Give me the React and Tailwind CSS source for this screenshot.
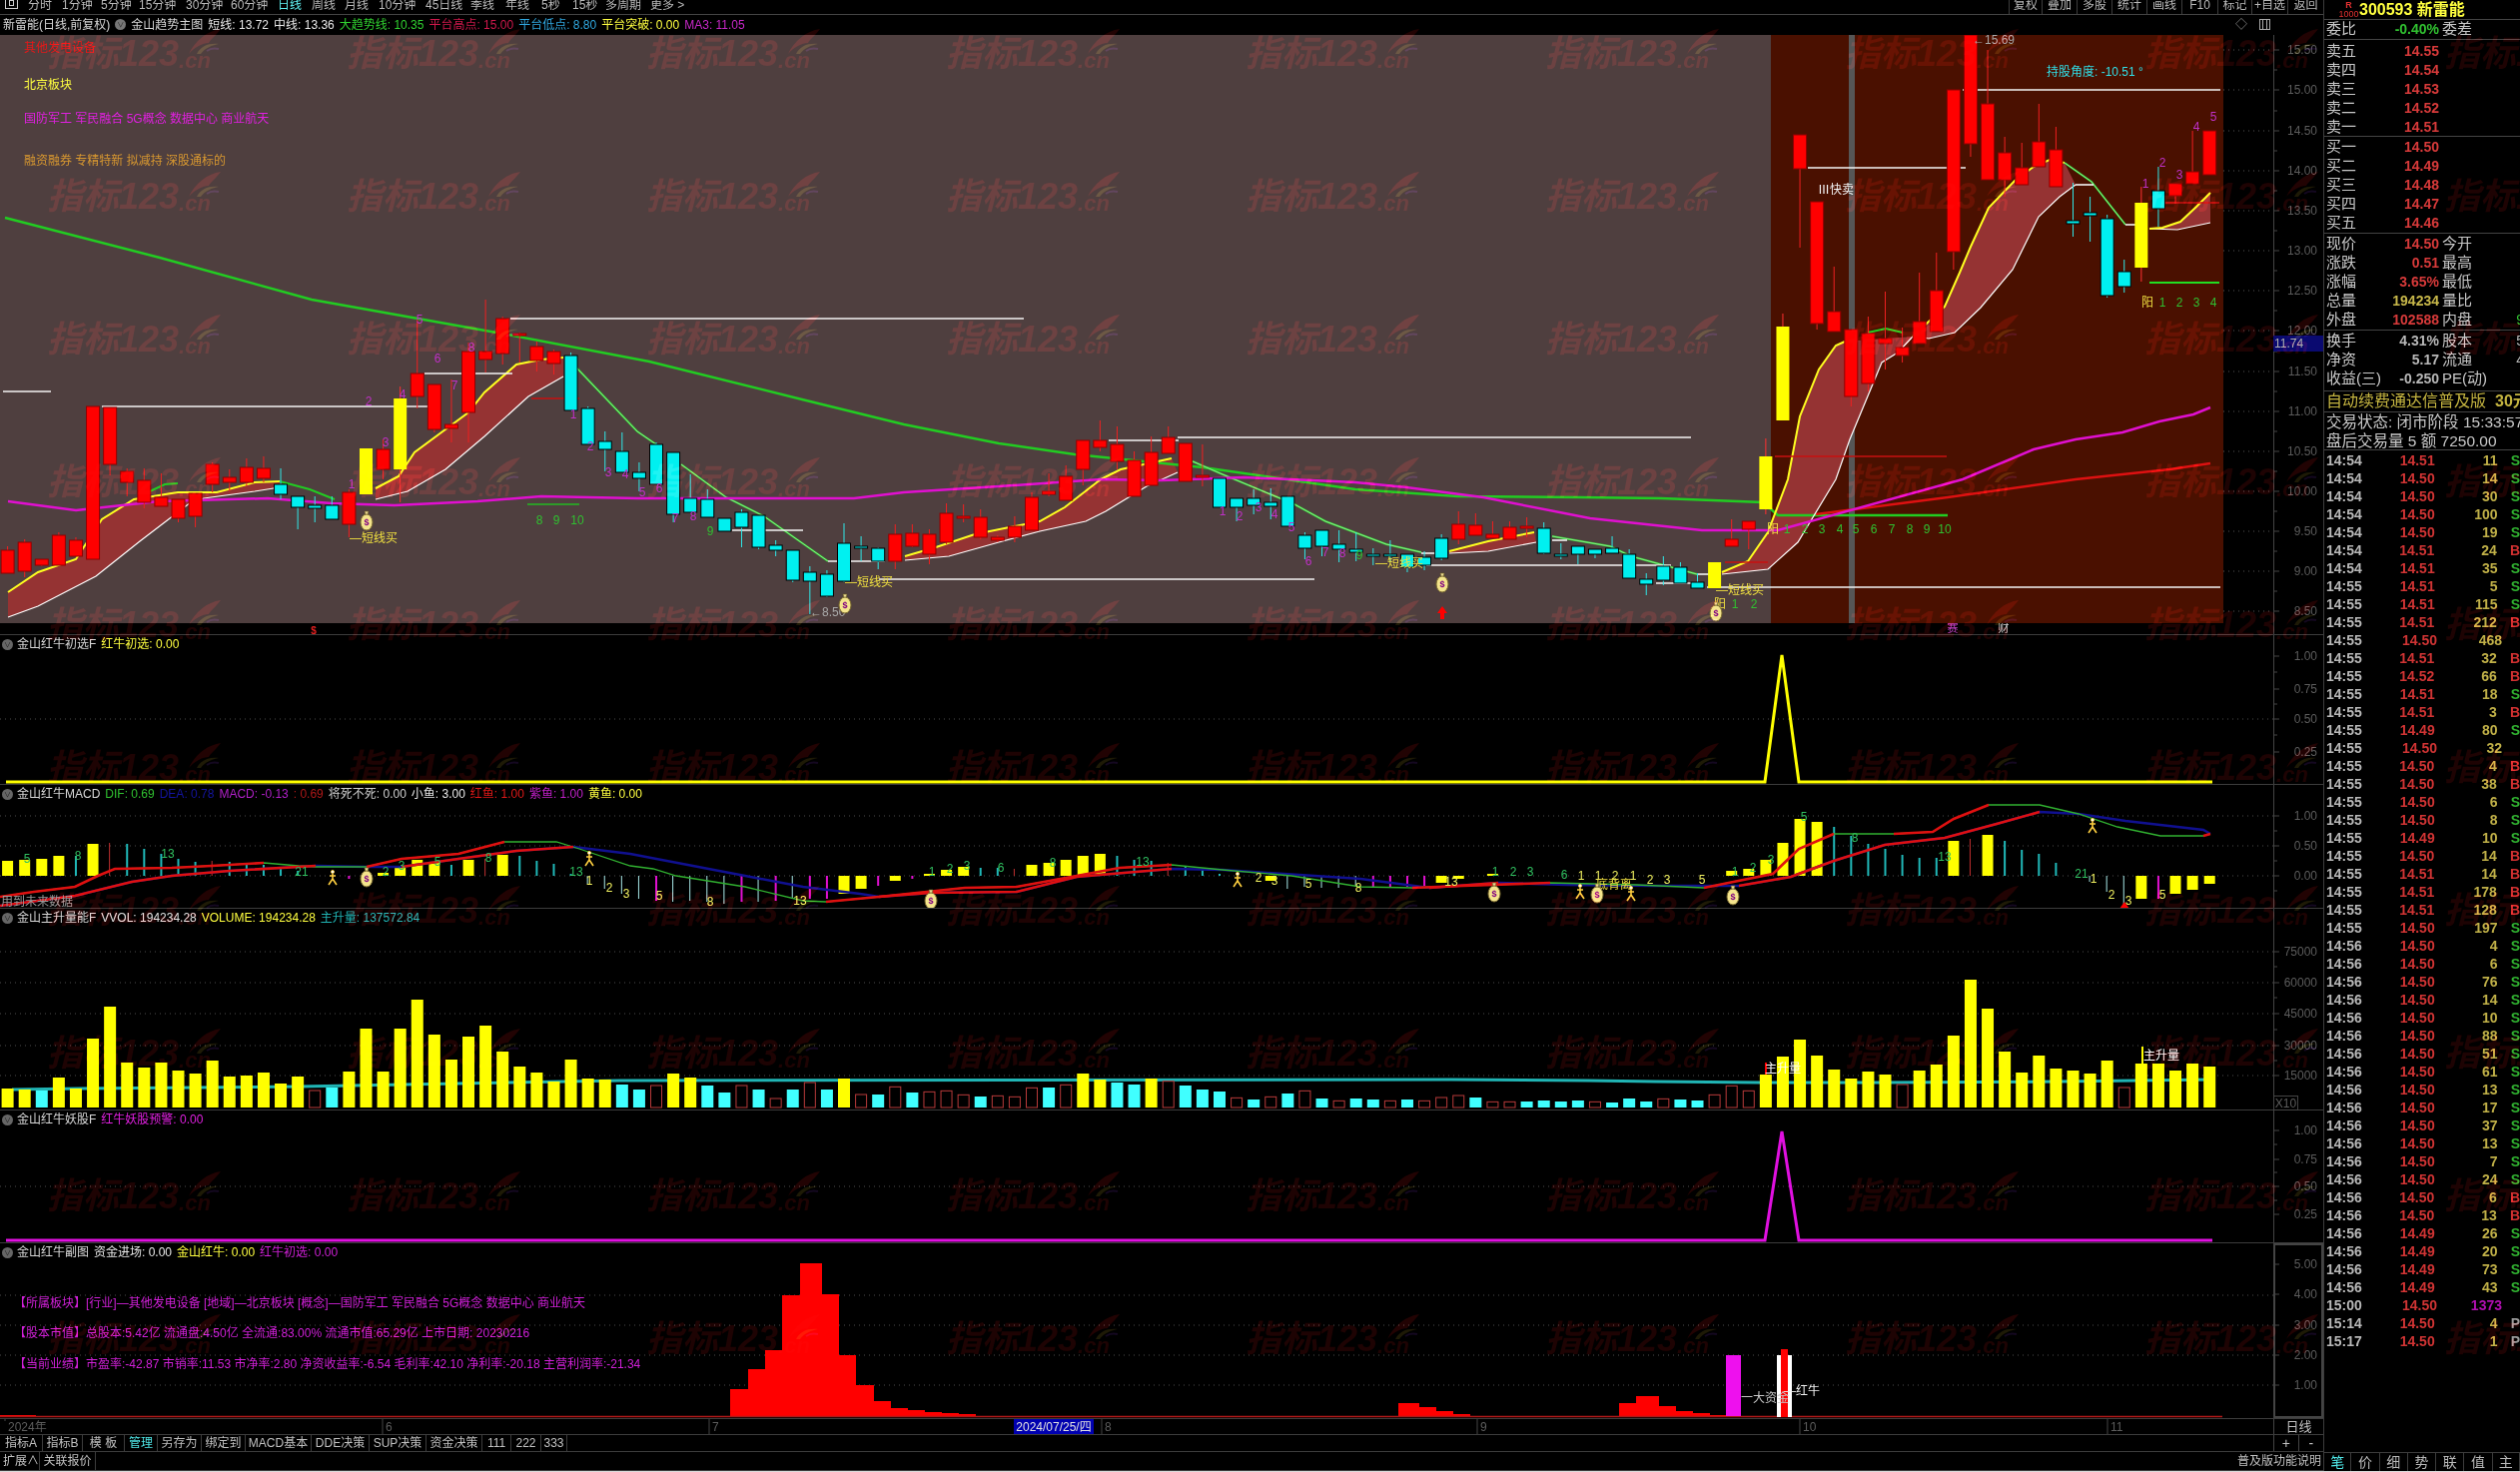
import React from "react";

const FONT = "[font-family:'Liberation_Sans','Noto_Sans_CJK_SC',sans-serif]";
const X = (i) => 7.6 + 17.09 * i;

/* type, high, top, bottom, low */
const C = [
["r",547,551,574,574],["r",540,543,572,578],["r",560,560,566,567],["r",533,536,566,566],["r",538,541,557,557],["r",407,407,560,560],["r",408,408,465,476],["r",469,472,483,497],["r",469,481,503,509],["r",474,498,507,507],
["r",500,500,519,523],["r",494,494,517,528],["r",463,465,485,493],["r",470,478,483,492],["r",459,468,483,487],["r",457,469,479,483],["c",469,485,495,500],["c",497,497,508,530],["c",497,506,509,523],["c",497,506,520,520],
["r",490,493,525,538],["y",449,449,495,495],["r",440,450,470,480],["y",387,399,470,503],["r",320,374,397,409],["r",385,385,430,433],["r",380,425,429,443],["r",343,352,413,443],["r",300,352,360,373],["r",317,319,354,365],
["r",333,334,336,363],["r",342,347,361,372],["r",350,352,364,375],["c",353,356,411,411],["c",407,409,445,445],["c",432,442,450,472],["c",433,452,473,473],["c",463,473,479,492],["c",443,445,485,485],["c",453,453,515,523],
["c",475,499,513,513],["c",490,500,518,518],["c",519,519,532,532],["c",510,513,528,548],["c",516,516,548,550],["c",541,546,551,557],["c",551,551,581,583],["c",567,573,582,615],["c",571,575,597,598],["c",524,544,582,583],
["c",537,547,549,562],["c",548,549,562,570],["r",525,535,562,570],["r",525,534,547,548],["r",530,535,555,565],["r",504,514,543,545],["r",505,517,519,523],["r",510,518,538,540],["r",536,538,541,543],["r",517,527,538,543],
["r",493,498,531,531],["r",474,492,495,497],["r",466,477,501,501],["r",441,441,470,486],["r",421,441,448,452],["r",427,445,462,470],["r",452,461,497,497],["r",437,453,486,486],["r",427,438,454,454],["r",444,444,482,482],
["r",445,476,478,487],["c",479,479,508,508],["c",499,499,508,522],["c",490,499,506,515],["c",489,503,507,520],["c",497,497,527,527],["c",533,536,549,560],["c",531,531,547,557],["c",531,545,550,563],["c",533,550,553,562],
["c",549,555,557,566],["c",541,555,557,563],["c",555,555,568,573],["c",552,558,566,571],["c",535,539,559,561],["r",512,525,540,545],["r",514,526,536,536],["r",522,535,539,539],["r",522,528,540,540],["r",518,527,529,538],
["c",523,529,554,555],["c",544,555,557,560],["c",547,547,555,565],["c",550,550,555,559],["c",537,549,554,554],["c",550,555,579,579],["c",574,580,585,596],["c",557,567,581,586],["c",563,568,584,584],["c",574,583,589,589],
["y",563,563,589,589],["r",520,540,547,547],["r",522,522,530,550],["y",439,457,510,515],["y",314,327,421,421],["r",135,135,169,248],["r",202,202,324,330],["r",267,312,332,332],["r",330,330,397,407],["r",317,334,384,392],
["r",292,339,344,370],["r",328,348,356,363],["r",273,322,344,344],["r",253,291,332,332],["r",90,90,252,270],["r",35,35,144,157],["r",50,104,180,180],["r",137,153,180,197],["r",143,168,185,185],["r",104,142,167,167],
["r",127,150,187,187],["c",183,221,224,237],["c",197,213,216,242],["c",215,219,296,298],["c",260,272,287,293],["y",187,203,268,282],["c",167,191,209,227],["r",184,184,196,204],["r",131,172,184,184],["r",131,131,175,175],
];

const RIB = [
 {u:[[8,593],[38,573],[76,560],[102,520],[134,500],[178,493],[217,493],[255,483],[280,482]], l:[[8,618],[38,607],[96,577],[140,542],[191,503],[204,499],[255,492],[280,488]]},
 {u:[[376,489],[399,477],[415,453],[446,430],[469,413],[485,393],[517,365],[542,360],[564,358]], l:[[376,500],[408,492],[446,470],[485,437],[529,397],[564,377]]},
 {u:[[906,557],[937,548],[976,535],[1041,522],[1066,508],[1102,480],[1122,470],[1173,459]], l:[[906,561],[950,557],[1000,543],[1041,532],[1087,522],[1107,512],[1148,487],[1179,473]]},
 {u:[[1451,552],[1490,542],[1536,533]], l:[[1451,554],[1490,552],[1538,543]]},
 {u:[[1724,573],[1750,562],[1770,533],[1790,480],[1802,417],[1821,370],[1838,346],[1847,342]], l:[[1724,575],[1770,570],[1800,543],[1838,480],[1852,440],[1884,363],[1900,353],[1915,337]]},
 {u:[[1915,337],[1947,307],[1962,273],[1973,247],[1991,208],[2018,180],[2036,167],[2052,160],[2067,163]], l:[[1915,337],[1931,339],[1957,333],[1983,308],[2015,270],[2041,217],[2062,197],[2078,185]]},
 {u:[[2152,229],[2165,228],[2183,222],[2199,207],[2213,193]], l:[[2152,229],[2180,230],[2213,223]]},
];
const pts = (a) => a.map((p) => p.join(",")).join(" ");

const BIGGREEN = [[5,218],[160,258],[312,300],[497,333],[650,362],[803,400],[905,425],[1000,444],[1076,455],[1204,468],[1357,490],[1459,497],[1582,498],[1663,499],[1765,503],[1780,516],[1950,516]];
const PURPLE = [[8,502],[76,511],[159,502],[268,499],[332,504],[395,506],[478,502],[542,497],[638,499],[855,499],[905,493],[1000,487],[1102,480],[1163,481],[1245,478],[1357,483],[1408,488],[1485,498],[1592,519],[1704,531],[1780,531],[1965,480],[2036,450],[2078,440],[2125,433],[2162,422],[2196,415],[2213,408]];
const REDL = [[1818,515],[1950,498],[2078,480],[2172,470],[2213,464]];
const THINGREEN = [
 [[577,368],[638,432],[657,445]],[[682,465],[727,498],[765,517],[829,562]],
 [[1194,462],[1224,475],[1296,505],[1327,522],[1388,545],[1423,553]],
 [[1554,537],[1612,547],[1633,557],[1699,575]],
 [[2067,163],[2094,182],[2128,225]],
];
const GREENTOP = [[[150,492],[165,485],[178,484]],[[280,482],[310,490],[335,500]],[[1870,333],[1888,329],[1905,333]]];
const WHITEL = [[3,392,51],[102,407,430],[425,374,513],[511,319,1025],[1179,438,1693],[1110,441,1180],[880,580,1316],[733,531,804],[1428,566,1673],[1709,588,2223],[1658,584,1704],[1965,90,2223],[1810,168,1968],[829,562,886],[1423,554,1439],[1554,541,1569],[2128,225,2140],[2078,185,2096],[1700,575,1715]];
const REDH = [[1777,457,1949],[2154,203,2222],[532,399,580],[1727,563,1770]];

function T({x,y,c="#fff",s=12,a="start",children}) {
  return <text x={x} y={y} fill={c} fontSize={s} textAnchor={a} dominantBaseline="central">{children}</text>;
}
function Bag({x,y}) {
  return <g transform={`translate(${x} ${y})`}>
    <path d="M-2 -10 L2 -10 L1 -6 L-1 -6 Z" fill="#e8d890" stroke="#6a5a20" strokeWidth=".6"/>
    <ellipse cx="0" cy="1" rx="6" ry="8" fill="#f4e48c" stroke="#7a6a30"/>
    <text x="0" y="1" fontSize="9" fontWeight="bold" fill="#800080" textAnchor="middle" dominantBaseline="central">$</text>
  </g>;
}
function Man({x,y}) {
  return <g transform={`translate(${x} ${y})`} stroke="#ffd040" strokeWidth="1.6" fill="none">
    <circle cx="0" cy="-6" r="1.6" fill="#fff" stroke="#ffd040" strokeWidth=".8"/>
    <path d="M0 -4 L0 1 L-4 7 M0 1 L4 7 M-3 -2 L3 -2"/>
  </g>;
}

function MainDraw() {
  const nums = [[420,320,"5"],[472,348,"8"],[438,359,"6"],[455,386,"7"],[369,402,"2"],[403,395,"4"],[386,443,"3"],[352,485,"1"],[574,415,"1"],[591,447,"2"],[609,473,"3"],[626,475,"4"],[643,493,"5"],[660,489,"6"],[676,519,"7"],[694,517,"8"],[1224,512,"1"],[1241,517,"2"],[1260,508,"3"],[1276,515,"4"],[1293,528,"5"],[1310,562,"6"],[1327,553,"7"],[1344,554,"8"],[2148,184,"1"],[2165,163,"2"],[2182,175,"3"],[2199,127,"4"],[2216,117,"5"]];
  const greens = [[711,532,"9"],[540,521,"8"],[557,521,"9"],[578,521,"10"],[1361,556,"9"],[1737,605,"1"],[1756,605,"2"],[1789,530,"1"],[1807,530,"2"],[1824,530,"3"],[1842,530,"4"],[1858,530,"5"],[1876,530,"6"],[1894,530,"7"],[1912,530,"8"],[1929,530,"9"],[1947,530,"10"],[2165,303,"1"],[2182,303,"2"],[2199,303,"3"],[2216,303,"4"]];
  return (
    <svg className="block" width="2226" height="589" viewBox="0 35 2226 589">
      <rect x="1773" y="35" width="453" height="589" fill="#4a1000"/>
      <rect x="1851" y="35" width="6" height="589" fill="#565656"/>
      <T x={24} y={48} c="#e81818">其他发电设备</T>
      <T x={24} y={85} c="#ffff40">北京板块</T>
      <T x={24} y={119} c="#e020e0">国防军工 军民融合 5G概念 数据中心 商业航天</T>
      <T x={24} y={161} c="#d89830">融资融券 专精特新 拟减持 深股通标的</T>
      {RIB.map((r,i)=><polygon key={i} points={pts([...r.u,...[...r.l].reverse()])} fill="#953333"/>)}
      <polyline points={pts(BIGGREEN)} fill="none" stroke="#22cc22" strokeWidth="2.5"/>
      <polyline points={pts(REDL)} fill="none" stroke="#dd1111" strokeWidth="2.5"/>
      {RIB.map((r,i)=><g key={i}><polyline points={pts(r.l)} fill="none" stroke="#fff" strokeWidth="1.2"/><polyline points={pts(r.u)} fill="none" stroke="#ffff20" strokeWidth="2"/></g>)}
      {THINGREEN.map((l,i)=><g key={i}><polyline points={pts(l)} fill="none" stroke="#30d030" strokeWidth="2"/><polyline points={pts(l)} fill="none" stroke="#c8f8c8" strokeWidth=".6"/></g>)}
      {GREENTOP.map((l,i)=><polyline key={i} points={pts(l)} fill="none" stroke="#22cc22" strokeWidth="2"/>)}
      {WHITEL.map(([a,y,b],i)=><line key={i} x1={a} x2={b} y1={y} y2={y} stroke="#f4f4f4" strokeWidth="1.6"/>)}
      {REDH.map(([a,y,b],i)=><line key={i} x1={a} x2={b} y1={y} y2={y} stroke="#c81010" strokeWidth="1.5"/>)}
      <line x1="2152" x2="2222" y1="283" y2="283" stroke="#22dd22" strokeWidth="2"/>
      <line x1="528" x2="580" y1="505" y2="505" stroke="#22bb22" strokeWidth="1.5"/>
      <polyline points={pts(PURPLE)} fill="none" stroke="#e010d0" strokeWidth="2.5"/>
      {C.map(([t,h,top,b,l],i)=>{
        const x=X(i); const col=t==="r"?"#ff0000":t==="c"?"#00f0f0":"#ffff00";
        const wick=t==="c"?"#30e8e8":t==="y"?"#ff3030":"#f02020";
        return <g key={i}>
          <line x1={x} x2={x} y1={h} y2={l} stroke={wick} strokeWidth="1"/>
          <rect x={x-6.5} y={top} width="13" height={Math.max(b-top,2)} fill={col} stroke={t==="r"?"#900000":t==="c"?"#000":"none"} strokeWidth="1"/>
        </g>;
      })}
      {nums.map(([x,y,n],i)=><T key={i} x={x} y={y} c="#c030c8" a="middle">{n}</T>)}
      {greens.map(([x,y,n],i)=><T key={i} x={x} y={y} c="#30c030" a="middle">{n}</T>)}
      <T x={350} y={539} c="#f0e040">—短线买</T>
      <T x={846} y={583} c="#f0e040">—短线买</T>
      <T x={1377} y={564} c="#f0e040">—短线买</T>
      <T x={1718} y={591} c="#f0e040">—短线买</T>
      <T x={811} y={613} c="#a8a8a8">←8.50</T>
      <T x={1722} y={605} c="#f0e040" a="middle">阳</T>
      <T x={1775} y={530} c="#f0e040" a="middle">阳</T>
      <T x={2150} y={303} c="#f0e040" a="middle">阳</T>
      <T x={1820} y={190} c="#f4f4f4">Ⅲ快卖</T>
      <T x={2049} y={72} c="#30e0e8">持股角度: -10.51 °</T>
      <T x={1975} y={40} c="#a8a8a8">←15.69</T>
      <Bag x={367} y={522}/><Bag x={846} y={605}/><Bag x={1444} y={584}/><Bag x={1718} y={613}/>
      <path d="M1444 607 L1449 614 L1446 614 L1446 620 L1442 620 L1442 614 L1439 614 Z" fill="#ff0000"/>
    </svg>
  );
}

function Strip() {
  return (
    <svg className="block" width="2226" height="11" viewBox="0 624 2226 11">
      <text x="314" y="631" fontSize="10" fontWeight="bold" fill="#e02020" textAnchor="middle" dominantBaseline="central">$</text>
      <T x={1955} y={629} c="#c040c0" s={11} a="middle">赛</T>
      <T x={2006} y={629} c="#d0d0d0" s={11} a="middle">财</T>
    </svg>
  );
}

function Axis({top,h,vals,left=2276,dots=[],mids=[]}) {
  return (
    <svg className="block shrink-0" width={2326-left} height={h} viewBox={`${left} ${top} ${2326-left} ${h}`}>
      {dots.map((y,i)=><line key={i} x1={left} x2="2276" y1={y} y2={y} stroke="#555" strokeDasharray="1 4"/>)}
      <line x1="2276.5" x2="2276.5" y1={top} y2={top+h} stroke="#444"/>
      {vals.map(([y,v],i)=><g key={i}><line x1="2276" x2="2282" y1={y} y2={y} stroke="#444"/><T x={2320} y={y} c="#5c5c5c" a="end">{v}</T></g>)}
      {mids.map((y,i)=><line key={i} x1="2276" x2="2280" y1={y} y2={y} stroke="#444"/>)}
    </svg>
  );
}

function Head({name,items}) {
  return (
    <div className="absolute left-0 top-0 flex h-[18px] items-center gap-[5px] pl-[2px] text-[12px] whitespace-nowrap">
      <span className="mr-[-1px] flex h-[11px] w-[11px] items-center justify-center rounded-full bg-[#666] text-[7px] leading-none text-[#222]">∨</span>
      <span className="text-[#d8d8d8]">{name}</span>
      {items.map(([t,c],i)=><span key={i} style={{color:c}}>{t}</span>)}
    </div>
  );
}

function Panel({top,h,name,items,vals,dots=[],mids=[],children,extra}) {
  return (
    <div className="flex border-b border-[#3c3c3c]" style={{height:h}}>
      <div className="relative w-[2276px] shrink-0">
        <svg className="block" width="2276" height={h-1} viewBox={`0 ${top} 2276 ${h-1}`}>
          {dots.map((y,i)=><line key={i} x1="0" x2="2276" y1={y} y2={y} stroke="#4c4c4c" strokeDasharray="1 4"/>)}
          {children}
        </svg>
        <Head name={name} items={items}/>
      </div>
      <Axis top={top} h={h-1} vals={vals} mids={mids}/>
      {extra}
    </div>
  );
}

/* MACD bars: index -> [type, y end]  */
const MB = {0:["y",862],1:["y",861],2:["y",860],3:["y",857],4:["c",857],5:["y",845],6:["r",844],7:["c",845],8:["c",850],9:["c",855],10:["c",860],11:["c",863],12:["r",862],13:["c",863],14:["c",864],15:["c",866],16:["c",870],17:["c",872],20:["p",880],21:["y",882],22:["y",874],23:["y",867],24:["y",861],25:["y",864],26:["c",866],27:["y",861],28:["r",860],29:["y",856],30:["c",857],31:["c",862],32:["c",865],33:["c",875],34:["w",885],35:["w",890],36:["w",895],37:["w",900],38:["p",902],39:["w",903],40:["w",902],41:["w",903],42:["w",905],43:["p",903],44:["w",903],45:["p",902],46:["w",900],47:["p",900],48:["p",900],49:["y",895],50:["y",890],51:["p",887],52:["y",882],53:["p",880],54:["y",875],55:["y",871],56:["y",868],57:["c",869],58:["c",869],59:["r",870],60:["y",866],61:["y",864],62:["y",861],63:["y",857],64:["y",855],65:["c",857],66:["c",861],67:["c",862],68:["r",864],69:["c",867],70:["c",870],71:["c",875],74:["y",882],75:["w",890],76:["w",888],77:["w",889],78:["w",889],79:["w",888],80:["p",889],81:["p",889],82:["p",888],83:["p",887],84:["y",884],85:["y",880],87:["y",875],101:["y",872],102:["y",870],103:["y",861],104:["y",844],105:["y",820],106:["y",823],107:["c",828],108:["c",837],109:["c",845],110:["c",850],111:["c",856],112:["c",859],113:["c",859],114:["y",842],115:["r",840],116:["y",836],117:["c",842],118:["c",851],119:["c",855],120:["c",864],122:["w",883],123:["w",893],124:["w",906],125:["y",900],126:["p",900],127:["y",895],128:["y",891],129:["y",885]};
const MA = [[0,898],[34,893],[75,888],[98,877],[115,870],[172,869],[212,867],[264,864],[299,867],[316,868],[367,868],[402,860],[459,855],[505,843],[557,843],[580,850],[631,867],[654,870],[677,877],[746,888],[804,902],[827,903],[880,898],[966,889],[1018,888],[1078,877],[1121,869],[1173,866],[1224,871],[1293,877],[1362,888],[1414,889],[1465,887],[1552,884],[1638,886],[1706,889],[1775,875],[1801,850],[1836,835],[1896,835],[1935,833],[1956,820],[1991,806],[2042,806],[2081,815],[2120,828],[2163,837],[2206,837],[2213,835]];
const MD = [[0,907],[75,897],[132,883],[172,877],[230,872],[316,867],[367,868],[402,868],[459,860],[517,852],[574,848],[631,855],[746,877],[804,888],[861,895],[880,898],[932,894],[1018,893],[1078,878],[1173,870],[1224,871],[1362,880],[1431,889],[1500,884],[1569,886],[1655,887],[1741,887],[1793,878],[1836,862],[1887,846],[1947,839],[1999,825],[2042,813],[2081,815],[2128,822],[2206,831],[2213,835]];

function seg(line,test){ // split a polyline into pieces by a rising test
  const out=[]; let cur=[];
  for(let i=0;i<line.length-1;i++){
    if(test(line[i],line[i+1])){ if(!cur.length)cur.push(line[i]); cur.push(line[i+1]); }
    else { if(cur.length)out.push(cur); cur=[]; }
  }
  if(cur.length)out.push(cur);
  return out;
}
const rising=(a,b)=>b[1]<a[1];

function MacdDraw() {
  const lbl=[[27,860,"5"],[78,857,"8"],[168,855,"13"],[302,873,"21"],[386,873,"2"],[402,867,"3"],[438,863,"5"],[489,859,"8"],[577,873,"13"],[933,873,"1"],[951,870,"2"],[968,867,"3"],[1002,869,"6"],[1054,864,"8"],[1144,863,"13"],[1497,873,"1"],[1515,873,"2"],[1532,873,"3"],[1566,876,"6"],[1737,873,"1"],[1755,869,"2"],[1773,861,"3"],[1806,818,"5"],[1857,839,"8"],[1947,858,"13"],[2084,875,"21"]];
  const wl=[[590,882,"1"],[610,889,"2"],[627,895,"3"],[660,897,"5"],[711,903,"8"],[801,902,"13"],[1260,879,"2"],[1276,882,"3"],[1310,885,"5"],[1360,889,"8"],[1453,883,"13"],[1583,877,"1"],[1600,877,"1"],[1617,877,"2"],[1635,877,"1"],[1652,881,"2"],[1669,881,"3"],[1704,881,"5"],[2096,880,"1"],[2114,896,"2"],[2131,902,"3"],[2165,896,"5"]];
  return <g>
    {Object.entries(MB).map(([i,[t,y]])=>{
      const x=X(+i); const h=Math.abs(y-877), top=Math.min(y,877);
      if(t==="y") return <rect key={i} x={x-5.5} y={top} width="11" height={h} fill="#ffff00"/>;
      const c=t==="c"?"#20b8b8":t==="r"?"#c03030":t==="p"?"#e010d0":"#a8e8e8";
      return <rect key={i} x={x-1} y={top} width={t==="w"||t==="r"?1:2} height={h} fill={c}/>;
    })}
    <polyline points={pts(MD)} fill="none" stroke="#101090" strokeWidth="2.5"/>
    <polyline points={pts(MA)} fill="none" stroke="#30b030" strokeWidth="1.3"/>
    {seg(MD,rising).map((l,i)=><polyline key={i} points={pts(l)} fill="none" stroke="#e01010" strokeWidth="2.6"/>)}
    {seg(MA,rising).map((l,i)=><polyline key={i} points={pts(l)} fill="none" stroke="#e01010" strokeWidth="2.6"/>)}
    {lbl.map(([x,y,n],i)=><T key={i} x={x} y={y} c="#30c060" a="middle">{n}</T>)}
    {wl.map(([x,y,n],i)=><T key={i} x={x} y={y} c="#f0f060" a="middle">{n}</T>)}
    <T x={1616} y={886} c="#f0e040" a="middle">底背离</T>
    <T x={1} y={903} c="#9a9a9a">用到未来数据</T>
    <Man x={333} y={879}/><Man x={590} y={860}/><Man x={1239} y={881}/><Man x={1582} y={893}/><Man x={1633} y={895}/><Man x={2095} y={827}/>
    <Bag x={367} y={879}/><Bag x={932} y={901}/><Bag x={1496} y={894}/><Bag x={1599} y={895}/><Bag x={1735} y={897}/>
    <path d="M2127 903 L2132 910 L2122 910 Z" fill="#ff0000"/>
  </g>;
}

const VOL = [["y",570],["y",573],["c",576],["y",537],["y",570],["y",420],["y",324],["y",492],["y",507],["y",492],["y",516],["y",525],["y",486],["y",534],["y",531],["y",522],["y",555],["y",534],["h",576],["c",567],["y",519],["y",390],["y",519],["y",390],["y",303],["y",408],["y",483],["y",414],["y",381],["y",459],["y",504],["y",522],["y",549],["y",483],["y",540],["y",543],["c",558],["c",573],["h",561],["y",525],["y",537],["c",561],["c",582],["h",561],["c",573],["h",600],["c",573],["h",552],["c",573],["y",540],["h",588]].map(([t,z])=>[t,900+z/3]);
const VOL2 = [["c",438],["h",415],["c",432],["h",430],["h",427],["h",439],["c",444],["h",442],["h",445],["h",418],["c",417],["h",409],["y",375],["y",393],["c",402],["c",408],["y",390],["h",398],["c",411],["c",423],["c",429],["h",448],["c",453],["h",445],["c",435],["h",427],["c",450],["h",457],["c",450],["c",453],["h",457],["c",453],["h",457],["h",447],["h",441],["c",447],["h",460],["h",460],["c",459],["c",456],["c",459],["c",456],["h",460],["c",462],["c",450],["c",459],["h",451],["c",453],["c",456],["h",439],["h",412],["h",427],["y",378],["y",324],["y",273],["y",321],["y",363],["y",390],["y",369],["y",378],["h",408],["y",366],["y",348],["y",261],["y",93],["y",180],["y",309],["y",372],["y",321],["y",360],["y",366],["y",375],["y",336],["h",417],["y",345],["y",345],["y",366],["y",345],["y",354]].map(([t,z])=>[t,950+z/3]);

function VolDraw() {
  const bars=[...VOL,...VOL2];
  return <g>
    <polyline points={pts([[12,1091],[80,1090],[300,1088],[620,1082],[1453,1081],[1590,1082],[1657,1083],[1763,1084],[1880,1084],[2060,1083],[2215,1081]])} fill="none" stroke="#20b4b4" strokeWidth="3"/>
    {bars.map(([t,y],i)=>{
      const x=X(i);
      if(t==="h") return <rect key={i} x={x-5.5} y={y} width="11" height={1109-y} fill="none" stroke="#b83a3a"/>;
      return <rect key={i} x={x-6} y={y} width="12" height={1109-y} fill={t==="y"?"#ffff00":"#40ffff"}/>;
    })}
    <line x1="1768" x2="1768" y1="1064" y2="1076" stroke="#ff0000" strokeWidth="2"/>
    <T x={1767} y={1070} c="#fff">主升量</T>
    <line x1="2145" x2="2145" y1="1048" y2="1066" stroke="#ffff00" strokeWidth="2"/>
    <T x={2146} y={1057} c="#fff">主升量</T>
  </g>;
}

function RedDraw() {
  const b=[[0,36,1417],[36,62,1419],[731,749,1391],[749,766,1371],[766,783,1352],[783,801,1297],[801,823,1265],[823,840,1296],[840,857,1357],[857,875,1387],[875,892,1403],[892,909,1410],[909,926,1412],[926,943,1414],[943,960,1415],[960,977,1416],[1400,1421,1405],[1421,1438,1409],[1438,1455,1413],[1455,1472,1416],[1621,1638,1405],[1638,1661,1398],[1661,1678,1408],[1678,1695,1413],[1695,1712,1415],[1712,1728,1417]];
  return <g>
    {b.map(([a,e,y],i)=><rect key={i} x={a} y={y} width={e-a} height={1419-y} fill="#ff0000"/>)}
    <line x1="0" x2="2225" y1="1418.5" y2="1418.5" stroke="#b01818" strokeWidth="1.5"/>
    <rect x="1728" y="1357" width="15" height="61" fill="#ee10ee"/>
    <rect x="1779" y="1357" width="15" height="62" fill="#fff"/>
    <rect x="1783" y="1351" width="7" height="68" fill="#ff0000"/>
    <T x={1743} y={1400} c="#c8c8c8" s={12}>一大资金</T>
    <T x={1786} y={1393} c="#f0f0f0" s={12}>—红牛</T>
    <T x={14} y={1305} c="#d020d8">【所属板块】[行业]—其他发电设备 [地域]—北京板块 [概念]—国防军工 军民融合 5G概念 数据中心 商业航天</T>
    <T x={14} y={1335} c="#d020d8">【股本市值】总股本:5.42亿 流通盘:4.50亿 全流通:83.00% 流通市值:65.29亿 上市日期: 20230216</T>
    <T x={14} y={1366} c="#d020d8">【当前业绩】市盈率:-42.87 市销率:11.53 市净率:2.80 净资收益率:-6.54 毛利率:42.10 净利率:-20.18 主营利润率:-21.34</T>
  </g>;
}

function Toolbar() {
  const L=[["分时",34],["1分钟",39],["5分钟",38],["15分钟",47],["30分钟",45],["60分钟",47],["日线",34,"#60f0f0"],["周线",33],["月线",34],["10分钟",47],["45日线",45],["季线",35],["年线",36],["5秒",31],["15秒",33],["多周期",45],["更多 >",50]];
  const R=[["复权",33],["叠加",35],["多股",35],["统计",35],["画线",35],["F10",36],["标记",34],["+自选",36],["返回",36]];
  return (
    <div className="flex h-[15px] items-start border-b border-[#444] text-[12px] leading-[10px] text-[#b8b8b8]">
      <div className="ml-[5px] mr-[10px] mt-[-1px] flex h-[10px] w-[13px] justify-center border border-[#ccc]"><span className="h-[6px] w-[5px] border border-[#ccc]"/></div>
      {L.map(([t,w,c],i)=><span key={i} className="h-[14px] overflow-hidden whitespace-nowrap" style={{width:w,color:c}}>{t}</span>)}
      <div className="ml-auto flex h-[14px]">
        {R.map(([t,w],i)=><span key={i} className="overflow-hidden whitespace-nowrap border-l border-[#3c3c3c] text-center" style={{width:w}}>{t}</span>)}
      </div>
    </div>
  );
}

function InfoBar() {
  const items=[["短线: 13.72","#e8e8e8"],["中线: 13.36","#e8e8e8"],["大趋势线: 10.35","#30d030"],["平台高点: 15.00","#d0184c"],["平台低点: 8.80","#30a8e0"],["平台突破: 0.00","#ffff40"],["MA3: 11.05","#c828c8"]];
  return (
    <div className="flex h-[20px] items-center gap-[5px] pl-[3px] pb-[1px] text-[12px] whitespace-nowrap text-[#d8d8d8]">
      <span>新雷能(日线,前复权)</span>
      <span className="flex h-[11px] w-[11px] items-center justify-center rounded-full bg-[#777] text-[7px] leading-none text-[#222]">∨</span>
      <span>金山趋势主图</span>
      {items.map(([t,c],i)=><span key={i} style={{color:c}}>{t}</span>)}
      <span className="ml-auto text-[#888] text-[12px]">◇</span>
      <div className="ml-[7px] mr-[53px] flex h-[11px] w-[11px] justify-center border border-[#aaa]"><span className="w-[5px] border-x border-[#aaa]"/></div>
    </div>
  );
}

function Watermark() {
  const cells=[]; for(let i=0;i<90;i++)cells.push(i);
  return (
    <div className="pointer-events-none absolute inset-0 z-20 grid grid-cols-[repeat(9,300px)] auto-rows-[143px] overflow-hidden pl-[47px] pt-[32px] mix-blend-plus-lighter">
      {cells.map((i)=>(
        <div key={i} className="relative flex h-[40px] items-end whitespace-nowrap font-bold italic leading-none text-[#1e0303]">
          <span className="text-[36px]">指标123</span><span className="text-[22px]">.cn</span>
          <svg className="absolute left-[140px] top-[-5px]" width="36" height="30" viewBox="0 0 36 30" fill="none">
            <path d="M2 27 C8 14 20 4 34 2 C28 10 24 12 22 16 C16 16 8 20 2 27Z" fill="#220303"/>
            <path d="M10 27 C14 19 22 16 32 17 C26 18 18 21 14 27Z" fill="#1e1a06"/>
            <path d="M20 24 C24 21 28 21 32 22" stroke="#140820" strokeWidth="2"/>
          </svg>
        </div>
      ))}
    </div>
  );
}

const QR=({l,v,c="#d83a3a",l2,v2,c2})=>(
  <div className="flex h-[19px] items-center whitespace-nowrap">
    <span className="w-[55px] text-[15px] text-[#c8c8c8]">{l}</span>
    <span className="w-[58px] text-right text-[14px] font-bold" style={{color:c}}>{v}</span>
    {l2&&<span className="ml-[3px] text-[15px] text-[#c8c8c8]">{l2}</span>}
    {v2&&<span className="absolute right-[-4px] text-[14px]" style={{color:c2}}>{v2}</span>}
  </div>
);

const TR=`54|51|11|S 54|50|14|S 54|50|30|S 54|50|100|S 54|50|19|S 54|51|24|B 54|51|35|S 55|51|5|S 55|51|115|S 55|51|212|B 55|50|468| 55|51|32|B 55|52|66|B 55|51|18|S 55|51|3|B 55|49|80|S 55|50|32| 55|50|4|B 55|50|38|B 55|50|6|S 55|50|8|S 55|49|10|S 55|50|14|B 55|51|14|B 55|51|178|B 55|51|128|B 55|50|197|S 56|50|4|S 56|50|6|S 56|50|76|S 56|50|14|S 56|50|10|S 56|50|88|S 56|50|51|S 56|50|61|S 56|50|13|S 56|50|17|S 56|50|37|S 56|50|13|S 56|50|7|S 56|50|24|S 56|50|6|B 56|50|13|B 56|49|26|S 56|49|20|S 56|49|73|S 56|49|43|S`.split(" ").map(r=>{const [m,p,v,f]=r.split("|");return ["14:"+m,"14."+p,v,f];}).concat([["15:00","14.50","1373",""],["15:14","14.50","4","P"],["15:17","14.50","1","P"]]);

function RightPanel() {
  return (
    <div className="flex w-[197px] shrink-0 flex-col overflow-hidden border-l border-[#3c3c3c]">
      <div className="flex h-[20px] shrink-0 items-center border-b border-[#444] pl-[16px]">
        <div className="mr-[2px] flex w-[17px] flex-col items-center text-[9px] font-bold leading-[9px] text-[#e03030]"><span>R</span><span className="font-normal">1000</span></div>
        <span className="whitespace-nowrap text-[16px] font-bold text-[#ffff40]">300593 新雷能</span>
      </div>
      <div className="flex h-[20px] shrink-0 items-center border-b border-[#444] pl-[2px]">
        <QR l="委比" v="-0.40%" c="#30c030" l2="委差"/>
      </div>
      <div className="h-[97px] shrink-0 border-b border-[#444] pl-[2px] pt-[2px]">
        {[["卖五","14.55"],["卖四","14.54"],["卖三","14.53"],["卖二","14.52"],["卖一","14.51"]].map(([l,v])=><QR key={l} l={l} v={v}/>)}
      </div>
      <div className="h-[97px] shrink-0 border-b border-[#444] pl-[2px] pt-[1px]">
        {[["买一","14.50"],["买二","14.49"],["买三","14.48"],["买四","14.47"],["买五","14.46"]].map(([l,v])=><QR key={l} l={l} v={v}/>)}
      </div>
      <div className="relative h-[97px] shrink-0 border-b border-[#444] pl-[2px] pt-[1px]">
        <QR l="现价" v="14.50" l2="今开"/>
        <QR l="涨跌" v="0.51" l2="最高"/>
        <QR l="涨幅" v="3.65%" l2="最低"/>
        <QR l="总量" v="194234" c="#c8b84a" l2="量比"/>
        <QR l="外盘" v="102588" l2="内盘" v2="9" c2="#30c030"/>
      </div>
      <div className="relative h-[61px] shrink-0 border-b border-[#444] pl-[2px] pt-[1px]">
        <QR l="换手" v="4.31%" c="#b8b8b8" l2="股本" v2="5" c2="#b8b8b8"/>
        <QR l="净资" v="5.17" c="#b8b8b8" l2="流通" v2="4" c2="#b8b8b8"/>
        <QR l="收益(三)" v="-0.250" c="#b8b8b8" l2="PE(动)"/>
      </div>
      <div className="flex h-[21px] shrink-0 items-center whitespace-nowrap border-b border-[#444] pl-[2px] text-[16px] text-[#c4b440]">
        自动续费通达信普及版<span className="ml-[9px] font-bold">30元</span>
      </div>
      <div className="h-[38px] shrink-0 whitespace-nowrap border-b border-[#444] pl-[2px] text-[15.5px] leading-[19px] text-[#c8c8c8]">
        <div>交易状态: 闭市阶段 15:33:57</div>
        <div>盘后交易量 5 额 7250.00</div>
      </div>
      <div className="flex-1 pl-[2px] pt-px text-[14px] font-bold">
        {TR.map(([t,p,v,f],i)=>(
          <div key={i} className="flex h-[18px] items-center whitespace-nowrap">
            <span className="w-[76px] text-[#b8b8b8]">{t}</span>
            <span className="w-[35px] text-right text-[#d03434]">{p}</span>
            <span className="w-[65px] text-right" style={{color:v==="1373"?"#b010b0":"#c0b048"}}>{v}</span>
            <span className="ml-[13px]" style={{color:f==="S"?"#30b030":f==="B"?"#d03030":"#999"}}>{f}</span>
          </div>
        ))}
      </div>
      <div className="flex h-[19px] shrink-0 items-center border-t border-[#3c3c3c] text-[14px] text-[#b8b8b8]">
        {[["笔",28,"#50e8e8"],["价",29],["细",29],["势",29],["联",29],["值",29],["主",28]].map(([t,w,c])=>(
          <span key={t} className="border-r border-[#3c3c3c] text-center leading-[18px]" style={{width:w,color:c}}>{t}</span>
        ))}
      </div>
    </div>
  );
}

export default function App() {
  const tabs=[["指标A",43],["指标B",40],["模 板",42],["管理",33,"#50e8e8"],["另存为",44],["绑定到",44],["MACD基本",66],["DDE决策",58],["SUP决策",57],["资金决策",56],["111",29],["222",30],["333",26]];
  return (
    <div className={`relative flex h-[1474px] w-[2523px] flex-col overflow-hidden bg-black ${FONT}`}>
      <div className="flex h-[1473px]">
        <div className="flex w-[2326px] shrink-0 flex-col">
          <Toolbar/>
          <InfoBar/>
          <div className="flex h-[601px] border-b border-[#3c3c3c]">
            <div className="w-[2226px] shrink-0">
              <div className="h-[589px] bg-[#4f3f3f]"><MainDraw/></div>
              <Strip/>
            </div>
            <div className="relative">
              <Axis top={35} h={600} left={2226} dots={[50,90,131,171,211,251,291,331,372,412,452,492,532,572,612]} mids={[70,111,151,191,231,271,311,352,392,432,472,512,552,592]}
                vals={[[50,"15.50"],[90,"15.00"],[131,"14.50"],[171,"14.00"],[211,"13.50"],[251,"13.00"],[291,"12.50"],[331,"12.00"],[372,"11.50"],[412,"11.00"],[452,"10.50"],[492,"10.00"],[532,"9.50"],[572,"9.00"],[612,"8.50"]]}/>
              <div className="absolute right-0 top-[301px] flex h-[16px] w-[50px] items-center bg-[#0a0a70] pl-[1px] text-[12px] text-[#b0b0b0]">11.74</div>
            </div>
          </div>
          <Panel top={636} h={150} name="金山红牛初选F" items={[["红牛初选: 0.00","#ffff40"]]} dots={[720]} mids={[673,705,736]}
            vals={[[657,"1.00"],[690,"0.75"],[720,"0.50"],[753,"0.25"]]}>
            <polyline points="6,783 1767,783 1784,656 1801,783 2215,783" fill="none" stroke="#ffff00" strokeWidth="3"/>
          </Panel>
          <Panel top={786} h={124} name="金山红牛MACD" items={[["DIF: 0.69","#30c030"],["DEA: 0.78","#1414a0"],["MACD: -0.13","#b020c8"],[": 0.69","#b01818"],["将死不死: 0.00","#d0d0d0"],["小鱼: 3.00","#e8e8e8"],["红鱼: 1.00","#e01818"],["紫鱼: 1.00","#c020c8"],["黄鱼: 0.00","#ffff40"]]} dots={[817,847,877]} mids={[832,862,892]}
            vals={[[817,"1.00"],[847,"0.50"],[877,"0.00"]]}>
            <MacdDraw/>
          </Panel>
          <Panel top={910} h={202} name="金山主升量能F" items={[["VVOL: 194234.28","#e0e0e0"],["VOLUME: 194234.28","#ffff40"],["主升量: 137572.84","#20b4b4"]]} dots={[953,984,1015,1047,1077]} mids={[968,999,1031,1062]}
            extra={<div className="absolute left-[2276px] top-[1097px] flex h-[15px] w-[25px] items-center justify-center border border-[#444] text-[12px] text-[#5c5c5c]">X10</div>}
            vals={[[953,"75000"],[984,"60000"],[1015,"45000"],[1047,"30000"],[1077,"15000"]]}>
            <VolDraw/>
          </Panel>
          <Panel top={1112} h={133} name="金山红牛妖股F" items={[["红牛妖股预警: 0.00","#e020e0"]]} dots={[1188]} mids={[1146,1174,1202]}
            vals={[[1132,"1.00"],[1161,"0.75"],[1188,"0.50"],[1216,"0.25"]]}>
            <polyline points="6,1242 1767,1242 1784,1133 1801,1242 2215,1242" fill="none" stroke="#e010e0" strokeWidth="3"/>
          </Panel>
          <div className="flex h-[176px] border-b border-[#3c3c3c]">
            <div className="relative w-[2276px] shrink-0">
              <svg className="block" width="2276" height="175" viewBox="0 1245 2276 175">
                {[1297,1327,1357,1387].map((y)=><line key={y} x1="0" x2="2276" y1={y} y2={y} stroke="#4c4c4c" strokeDasharray="1 4"/>)}
                <RedDraw/>
              </svg>
              <Head name="金山红牛副图" items={[["资金进场: 0.00","#e8e8e8"],["金山红牛: 0.00","#ffff40"],["红牛初选: 0.00","#d020d8"]]}/>
            </div>
            <div className="w-[50px] shrink-0 border-2 border-[#444]">
              <svg className="block" width="46" height="171" viewBox="2278 1247 46 171">
                {[[1266,"5.00"],[1296,"4.00"],[1327,"3.00"],[1357,"2.00"],[1387,"1.00"]].map(([y,v])=><g key={y}><line x1="2278" x2="2282" y1={y} y2={y} stroke="#444"/><T x={2320} y={y} c="#5c5c5c" a="end">{v}</T></g>)}
              </svg>
            </div>
          </div>
          <div className="flex h-[16px] border-b border-[#3c3c3c]">
            <div className="relative w-[2276px] shrink-0">
              <svg className="block" width="2276" height="15" viewBox="0 1421 2276 15">
                {[[8,"2024年"],[386,"6"],[713,"7"],[1106,"8"],[1482,"9"],[1805,"10"],[2113,"11"]].map(([x,v])=><g key={x}><line x1={x-3} x2={x-3} y1="1421" y2={v.length>3?1423:1436} stroke="#444"/><T x={x} y={1429} c="#5c5c5c">{v}</T></g>)}
              </svg>
              <div className="absolute left-[1015px] top-0 flex h-[15px] w-[80px] items-center justify-center bg-[#0000b0] text-[12px] text-[#e0e0e0]">2024/07/25/四</div>
            </div>
            <div className="flex w-[50px] items-center justify-center border-l border-[#444] text-[13px] text-[#c0c0c0]">日线</div>
          </div>
          <div className="flex h-[17px] border-b border-[#3c3c3c] text-[12px] leading-[16px] text-[#c0c0c0]">
            {tabs.map(([t,w,c])=><span key={t} className="whitespace-nowrap border-r border-[#3c3c3c] text-center" style={{width:w,color:c}}>{t}</span>)}
            <span className="ml-auto flex w-[50px] border-l border-[#444]"><span className="w-[25px] border-r border-[#444] text-center text-[14px]">+</span><span className="w-[25px] text-center text-[14px]">-</span></span>
          </div>
          <div className="flex h-[19px] items-center border-b border-[#3c3c3c] text-[12px] leading-[18px] text-[#c0c0c0]">
            <span className="w-[40px] border-r border-[#3c3c3c] pl-[3px]">扩展∧</span>
            <span className="w-[56px] border-r border-[#3c3c3c] text-center">关联报价</span>
            <span className="ml-auto mr-[2px] whitespace-nowrap">普及版功能说明</span>
          </div>
        </div>
        <RightPanel/>
      </div>
      <div className="h-[1px] bg-[#d8d8d8]"/>
      <Watermark/>
    </div>
  );
}
